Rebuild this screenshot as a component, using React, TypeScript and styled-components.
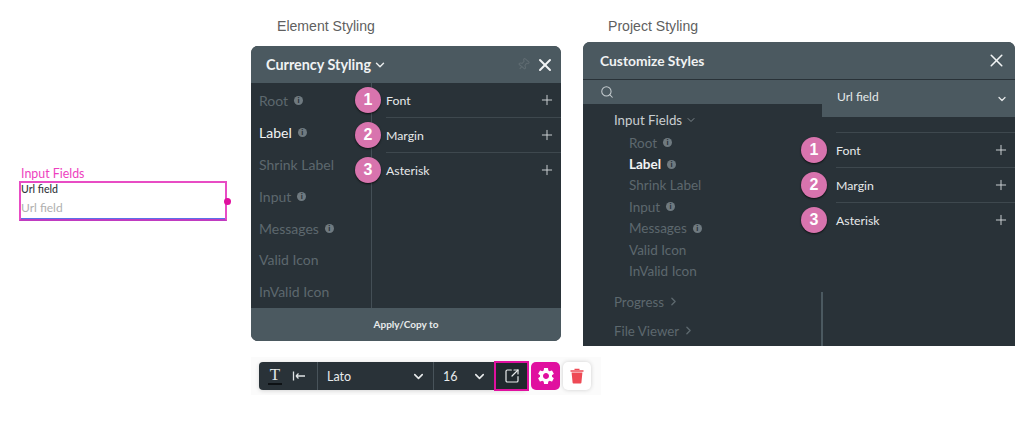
import React from "react";
import styled, { createGlobalStyle } from "styled-components";
import { X, Plus, ChevronDown, ChevronRight, Search, Pin, SquareArrowOutUpRight } from "lucide-react";
import { MdSettings } from "react-icons/md";

const Global = createGlobalStyle`
  html, body { margin: 0; padding: 0; background: #fff; }
  body { width: 1024px; height: 438px; overflow: hidden; font-family: Lato, "Liberation Sans", sans-serif; }
`;

const Page = styled.div`
  display: flex;
  align-items: flex-start;
  height: 438px;
`;
const LeftCol = styled.div`
  width: 208px;
  margin: 166px 0 0 19px;
`;
const FieldTitle = styled.div`
  font-size: 12.4px;
  line-height: 15px;
  color: #ee3fc0;
  padding-left: 2px;
`;
const FieldBox = styled.div`
  position: relative;
  height: 36px;
  box-sizing: content-box;
  border: 2px solid #e84cc4;
  border-bottom-color: #c03bc0;
  box-shadow: inset 0 -1px 0 #5a70e8;
`;
const FieldLabel = styled.div`
  font-size: 10.6px;
  line-height: 12px;
  font-weight: 500;
  color: #33383c;
`;
const FieldPlaceholder = styled.div`
  font-size: 12px;
  line-height: 15px;
  color: #b0b0b0;
  margin-top: 5px;
`;
const Handle = styled.span`
  position: absolute;
  right: -6px;
  top: 15px;
  width: 7px;
  height: 7px;
  border-radius: 50%;
  background: #e0109f;
`;

const ElementCol = styled.div`
  width: 310px;
  margin-left: 24px;
`;
const ProjectCol = styled.div`
  width: 432px;
  margin-left: 22px;
`;
const Heading = styled.div<{ $top: number; $mb: number; $left: number }>`
  font-family: "Liberation Sans", Arial, sans-serif;
  font-size: 14.1px;
  line-height: 16px;
  color: #5f5f5f;
  margin: ${(p) => p.$top}px 0 ${(p) => p.$mb}px ${(p) => p.$left}px;
`;
const Panel = styled.div<{ $h: number; $square?: boolean }>`
  height: ${(p) => p.$h}px;
  background: #293238;
  border-radius: ${(p) => (p.$square ? "7px 7px 0 0" : "7px")};
  overflow: hidden;
  display: flex;
  flex-direction: column;
  color: #fff;
`;
const PanelHeader = styled.div<{ $pad: number; $right: number }>`
  flex: 0 0 37px;
  background: #4b5960;
  display: flex;
  align-items: center;
  padding: 0 ${(p) => p.$right}px 0 ${(p) => p.$pad}px;
  gap: 2px;
`;
const PanelTitle = styled.div<{ $size: number }>`
  font-size: ${(p) => p.$size}px;
  font-weight: 700;
  color: #f0f2f3;
`;
const Spacer = styled.div`
  flex: 1;
`;
const PinIcon = styled(Pin)`
  transform: rotate(40deg);
  margin-right: 3px;
`;
const ElementBody = styled.div`
  flex: 1;
  display: flex;
  min-height: 0;
`;
const ElementSide = styled.div`
  width: 112px;
  border-right: 1px solid #444f56;
  padding: 2px 0 0 8px;
  box-sizing: content-box;
`;
const SideItem = styled.div<{ $active?: boolean }>`
  height: 31.8px;
  display: flex;
  align-items: center;
  gap: 6px;
  font-size: 14px;
  color: ${(p) => (p.$active ? "#f2f4f5" : "#5d686e")};
`;
const Info = styled.span`
  width: 9px;
  height: 9px;
  border-radius: 50%;
  background: #6f7a80;
  color: #293238;
  font-size: 8px;
  font-weight: 900;
  line-height: 9px;
  text-align: center;
  display: inline-block;
`;
const Rows = styled.div`
  flex: 1;
  padding-left: 14px;
`;
const Row = styled.div<{ $last?: boolean; $h: number }>`
  position: relative;
  height: ${(p) => p.$h}px;
  display: flex;
  align-items: center;
  justify-content: space-between;
  padding-right: 6px;
  font-size: 12.3px;
  color: #e6e9ea;
  border-bottom: 1px solid ${(p) => (p.$last ? "transparent" : "#3e484e")};
  box-sizing: border-box;
`;
const Badge = styled.span<{ $left: number }>`
  position: absolute;
  left: ${(p) => p.$left}px;
  top: 50%;
  margin-top: -13px;
  width: 26px;
  height: 26px;
  border-radius: 50%;
  background: #d874ae;
  box-shadow: 0 1px 2px rgba(0, 0, 0, 0.7);
  display: flex;
  align-items: center;
  justify-content: center;
  font-family: "Liberation Sans", Arial, sans-serif;
  font-size: 16px;
  font-weight: 700;
  color: #fff;
`;
const Footer = styled.div`
  flex: 0 0 33px;
  box-sizing: border-box;
  padding-bottom: 1px;
  background: #4b5960;
  display: flex;
  align-items: center;
  justify-content: center;
  font-size: 10px;
  font-weight: 700;
  color: #e8ebec;
`;

const ToolbarBand = styled.div`
  margin-top: 16px;
  width: 350px;
  height: 38px;
  padding: 5px 0 5px 8px;
  box-sizing: border-box;
  background: #fbfbfb;
  display: flex;
  align-items: center;
`;
const Toolbar = styled.div`
  width: 268px;
  height: 28px;
  background: #293238;
  border-radius: 4px;
  display: flex;
  align-items: center;
  position: relative;
  color: #e8ebec;
  box-shadow: 0 1px 4px rgba(0, 0, 0, 0.15);
`;
const Cell = styled.div<{ $w: number; $pad?: number; $line?: boolean }>`
  width: ${(p) => p.$w}px;
  height: 100%;
  box-sizing: border-box;
  padding: 0 7px 0 ${(p) => p.$pad ?? 9}px;
  display: flex;
  align-items: center;
  justify-content: space-between;
  font-size: 12.5px;
  border-right: ${(p) => (p.$line ? "1px solid #48535a" : "0")};
`;
const TIcon = styled.span`
  font-family: "Liberation Serif", serif;
  font-size: 17px;
  line-height: 16px;
  border-bottom: 2px solid #0d1114;
  color: #dfe3e5;
  width: 14px;
  text-align: center;
`;
const IndentIcon = styled.svg`
  margin-right: 4px;
`;
const Outlined = styled.div`
  position: absolute;
  right: -2px;
  top: -1px;
  width: 35px;
  height: 30px;
  box-sizing: border-box;
  border: 2px solid #e0109f;
  display: flex;
  align-items: center;
  justify-content: center;
  background: #20282d;
  color: #e8ebec;
`;
const ActionButton = styled.div<{ $pink?: boolean }>`
  width: ${(p) => (p.$pink ? 29 : 28)}px;
  height: 28px;
  border-radius: 5px;
  display: flex;
  align-items: center;
  justify-content: center;
  background: ${(p) => (p.$pink ? "#e0109f" : "#fff")};
  box-shadow: ${(p) => (p.$pink ? "none" : "0 0 4px rgba(0,0,0,0.18)")};
  margin-left: ${(p) => (p.$pink ? 4 : 3)}px;
`;

const ProjectBody = styled.div`
  flex: 1;
  display: flex;
  min-height: 0;
  margin-top: 1px;
`;
const ProjectSide = styled.div`
  width: 239px;
  position: relative;
  flex: none;
`;
const SearchBar = styled.div`
  height: 24px;
  background: #4b5960;
  display: flex;
  align-items: center;
  padding-left: 17px;
  color: #c6cdd0;
`;
const Tree = styled.div`
  padding: 3px 0 0 31px;
`;
const Group = styled.div<{ $dim?: boolean; $mt?: number; $h?: number }>`
  height: ${(p) => p.$h ?? 22}px;
  margin-top: ${(p) => p.$mt ?? 0}px;
  display: flex;
  align-items: center;
  gap: 3px;
  font-size: 13.3px;
  color: ${(p) => (p.$dim ? "#5d686e" : "#c9ced1")};
`;
const TreeItem = styled.div<{ $active?: boolean }>`
  height: 21.4px;
  margin-left: 15px;
  display: flex;
  align-items: center;
  gap: 6px;
  font-size: 13.5px;
  font-weight: ${(p) => (p.$active ? 700 : 400)};
  color: ${(p) => (p.$active ? "#f2f4f5" : "#5d686e")};
`;
const Scrollbar = styled.span`
  position: absolute;
  right: -1px;
  bottom: 0;
  width: 2px;
  height: 54px;
  background: #4b5960;
`;
const ProjectMain = styled.div`
  flex: 1;
  display: flex;
  flex-direction: column;
`;
const Select = styled.div`
  flex: 0 0 37px;
  background: #4b5960;
  position: relative;
  padding: 9px 0 0 15px;
  box-sizing: border-box;
  font-size: 12px;
  line-height: 16px;
  color: #e6e9ea;
`;
const SelectCaret = styled.span`
  position: absolute;
  right: 7px;
  top: 13px;
  display: flex;
  color: #e6e9ea;
`;
const RowsDivider = styled.div`
  height: 15px;
  border-bottom: 1px solid #3e484e;
`;

const elementItems = [
  { t: "Root", i: true },
  { t: "Label", i: true, a: true },
  { t: "Shrink Label" },
  { t: "Input", i: true },
  { t: "Messages", i: true },
  { t: "Valid Icon" },
  { t: "InValid Icon" },
];
const rows = ["Font", "Margin", "Asterisk"];

export default function App() {
  return (
    <Page>
      <Global />
      <LeftCol>
        <FieldTitle>Input Fields</FieldTitle>
        <FieldBox>
          <FieldLabel>Url field</FieldLabel>
          <FieldPlaceholder>Url field</FieldPlaceholder>
          <Handle />
        </FieldBox>
      </LeftCol>

      <ElementCol>
        <Heading $top={18} $mb={12} $left={26}>Element Styling</Heading>
        <Panel $h={295}>
          <PanelHeader $pad={15} $right={6}>
            <PanelTitle $size={14.4}>Currency Styling</PanelTitle>
            <ChevronDown size={14} strokeWidth={2.5} color="#e6e9ea" />
            <Spacer />
            <PinIcon size={13} color="#5f6b71" />
            <X size={20} strokeWidth={2.4} color="#f2f4f5" />
          </PanelHeader>
          <ElementBody>
            <ElementSide>
              {elementItems.map((it) => (
                <SideItem key={it.t} $active={it.a}>
                  {it.t}
                  {it.i && <Info>i</Info>}
                </SideItem>
              ))}
            </ElementSide>
            <Rows>
              {rows.map((r, i) => (
                <Row key={r} $h={35} $last={i === 2}>
                  <Badge $left={-31}>{i + 1}</Badge>
                  {r}
                  <Plus size={16} strokeWidth={1.4} color="#d4d9db" />
                </Row>
              ))}
            </Rows>
          </ElementBody>
          <Footer>Apply/Copy to</Footer>
        </Panel>
        <ToolbarBand>
          <Toolbar>
            <Cell $w={59} $line $pad={9}>
              <TIcon>T</TIcon>
              <IndentIcon width="14" height="12" viewBox="0 0 14 12" fill="none" stroke="#dfe3e5" strokeWidth="1.3">
                <path d="M1.5 1.5v9M4 6h9M4 6l2.5-2.5M4 6l2.5 2.5" />
              </IndentIcon>
            </Cell>
            <Cell $w={116} $line>
              Lato
              <ChevronDown size={15} strokeWidth={2.5} />
            </Cell>
            <Cell $w={60}>
              16
              <ChevronDown size={15} strokeWidth={2.5} />
            </Cell>
            <Outlined>
              <SquareArrowOutUpRight size={16} strokeWidth={1.8} />
            </Outlined>
          </Toolbar>
          <ActionButton $pink>
            <MdSettings size={20} color="#fff" />
          </ActionButton>
          <ActionButton>
            <svg width="14" height="16" viewBox="0 0 14 16" fill="#ee4a55">
              <path d="M0.5 2.2h13v1.6h-13zM4.5 0.8h5v1.2h-5zM1.6 4.6h10.8l-1 10.2a0.9 0.9 0 0 1-.9.8H3.5a0.9 0.9 0 0 1-.9-.8z" />
            </svg>
          </ActionButton>
        </ToolbarBand>
      </ElementCol>

      <ProjectCol>
        <Heading $top={18} $mb={8} $left={25}>Project Styling</Heading>
        <Panel $h={304} $square>
          <PanelHeader $pad={17} $right={8}>
            <PanelTitle $size={13.8}>Customize Styles</PanelTitle>
            <Spacer />
            <X size={21} strokeWidth={1.8} color="#f2f4f5" />
          </PanelHeader>
          <ProjectBody>
            <ProjectSide>
              <SearchBar>
                <Search size={14} strokeWidth={1.8} />
              </SearchBar>
              <Tree>
                <Group $h={25}>
                  Input Fields
                  <ChevronDown size={12} color="#7d878c" />
                </Group>
                {elementItems.map((it) => (
                  <TreeItem key={it.t} $active={it.a}>
                    {it.t}
                    {it.i && <Info>i</Info>}
                  </TreeItem>
                ))}
                <Group $dim $mt={9}>
                  Progress
                  <ChevronRight size={13} strokeWidth={2.5} />
                </Group>
                <Group $dim $mt={7}>
                  File Viewer
                  <ChevronRight size={13} strokeWidth={2.5} />
                </Group>
              </Tree>
              <Scrollbar />
            </ProjectSide>
            <ProjectMain>
              <Select>
                Url field
                <SelectCaret>
                  <ChevronDown size={12} strokeWidth={2.5} />
                </SelectCaret>
              </Select>
              <Rows>
                <RowsDivider />
                {rows.map((r, i) => (
                  <Row key={r} $h={35} $last={i === 2}>
                    <Badge $left={-35}>{i + 1}</Badge>
                    {r}
                    <Plus size={16} strokeWidth={1.4} color="#d4d9db" />
                  </Row>
                ))}
              </Rows>
            </ProjectMain>
          </ProjectBody>
        </Panel>
      </ProjectCol>
    </Page>
  );
}
